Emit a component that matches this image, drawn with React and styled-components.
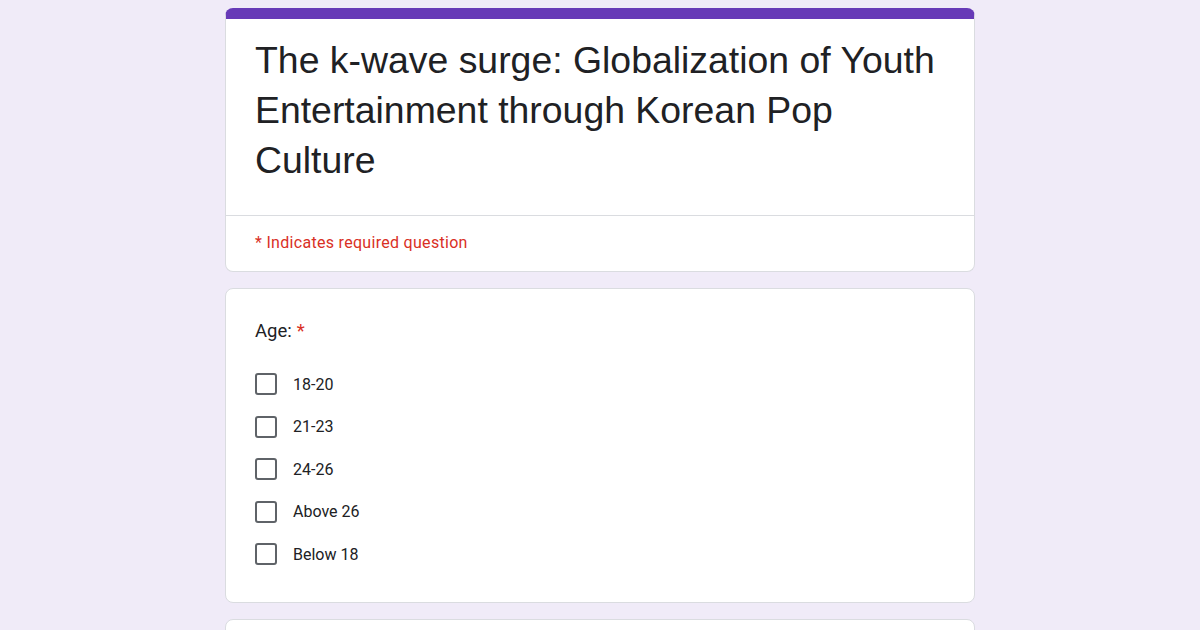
import React from "react";
import styled, { createGlobalStyle } from "styled-components";

const Global = createGlobalStyle`
  html, body { margin: 0; padding: 0; background: #f0ebf8; }
  body { font-family: Roboto, "Liberation Sans", Arial, sans-serif; }
  * { box-sizing: border-box; }
`;

const Page = styled.div`
  width: 750px;
  margin: 0 auto;
  padding-top: 8px;
  display: flex;
  flex-direction: column;
  gap: 16px;
`;

const Card = styled.div`
  background: #fff;
  border: 1px solid #dadce0;
  border-radius: 8px;
  overflow: hidden;
  ${(p) => p.$accent && `border-top: 11px solid #673ab7;`}
`;

const TitleBlock = styled.div`
  padding: 16px 30px 30px 29px;
  border-bottom: 1px solid #dadce0;
`;

const Title = styled.h1`
  margin: 0;
  font-family: "Liberation Sans", Arial, sans-serif;
  font-weight: 400;
  font-size: 37.4px;
  line-height: 50px;
  color: #202124;
`;

const Required = styled.div`
  padding: 18px 30px 19px 29px;
  font-size: 16px;
  line-height: 18px;
  letter-spacing: 0.3px;
  color: #d93025;
`;

const Question = styled.div`
  padding: 30px 30px 26px 29px;
`;

const QLabel = styled.div`
  font-size: 18.5px;
  line-height: 24px;
  color: #202124;
  margin-bottom: 20px;
`;

const Star = styled.span`
  color: #d93025;
  margin-left: 5px;
`;

const Options = styled.div`
  display: flex;
  flex-direction: column;
`;

const Option = styled.label`
  display: flex;
  align-items: center;
  height: 42.5px;
  gap: 16px;
  font-size: 16px;
  color: #202124;
`;

const Box = styled.span`
  width: 22px;
  height: 22px;
  border: 2px solid #5f6368;
  border-radius: 3px;
  flex-shrink: 0;
`;

export default function App() {
  const opts = ["18-20", "21-23", "24-26", "Above 26", "Below 18"];
  return (
    <>
      <Global />
      <Page>
        <Card $accent>
          <TitleBlock>
            <Title>
              The k-wave surge: Globalization of Youth Entertainment through
              Korean Pop Culture
            </Title>
          </TitleBlock>
          <Required>* Indicates required question</Required>
        </Card>
        <Card>
          <Question>
            <QLabel>
              Age:<Star>*</Star>
            </QLabel>
            <Options>
              {opts.map((o) => (
                <Option key={o}>
                  <Box />
                  {o}
                </Option>
              ))}
            </Options>
          </Question>
        </Card>
        <Card>
          <Question>
            <QLabel>&nbsp;</QLabel>
          </Question>
        </Card>
      </Page>
    </>
  );
}
